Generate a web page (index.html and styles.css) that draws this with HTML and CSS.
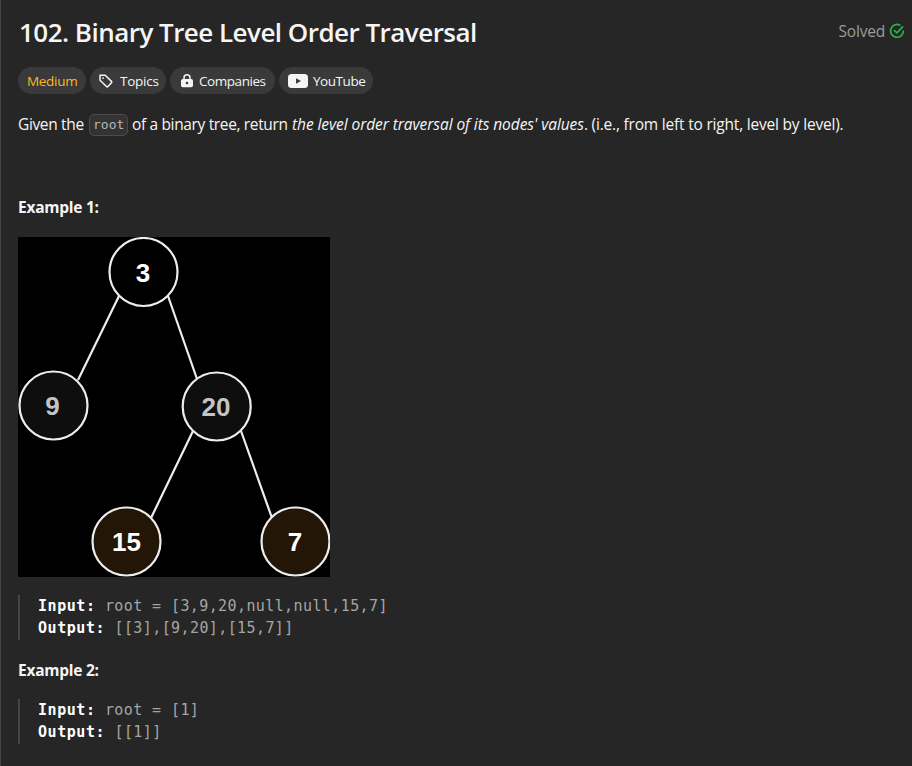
FILE: index.html
```html
<!DOCTYPE html>
<html lang="en">
<head>
<meta charset="utf-8">
<title>102. Binary Tree Level Order Traversal</title>
<link rel="stylesheet" href="styles.css">
</head>
<body>
<main class="problem">
  <header class="heading">
    <h1>102. Binary Tree Level Order Traversal</h1>
    <div class="status"><span>Solved</span>
      <svg width="16" height="16" viewBox="0 0 16 16" fill="none" stroke="#2cb34b" stroke-width="1.7" stroke-linecap="round" stroke-linejoin="round"><path d="M10.8 2.1A6.4 6.4 0 1 0 14.4 8"/><path d="M5.5 7.6l2.3 2.2 5.8-6"/></svg>
    </div>
  </header>
  <div class="tags">
    <span class="tag medium">Medium</span>
    <span class="tag topics"><svg width="16" height="16" viewBox="0 0 16 16" fill="none" stroke="#f5f5f5" stroke-width="1.5" stroke-linejoin="round"><path d="M2 2.2h5.2l6.3 6.2a1 1 0 0 1 0 1.4l-3.6 3.7a1 1 0 0 1-1.4 0L2 7.3z"/><circle cx="5" cy="5.1" r=".9" fill="#f5f5f5" stroke="none"/></svg><span>Topics</span></span>
    <span class="tag companies"><svg width="14" height="16" viewBox="0 0 14 16"><path d="M4 7V4.8a3 3 0 0 1 6 0V7" fill="none" stroke="#f5f5f5" stroke-width="1.5"/><rect x="1" y="6" width="12" height="8.3" rx="1.8" fill="#f5f5f5"/><circle cx="7" cy="10" r="1.3" fill="#3a3a3a"/></svg><span>Companies</span></span>
    <span class="tag youtube"><svg width="20" height="14" viewBox="0 0 20 14"><rect width="20" height="14" rx="3.5" fill="#f5f5f5"/><path d="M8 4.3v5.4L13 7z" fill="#3a3a3a"/></svg><span>YouTube</span></span>
  </div>
  <p class="statement"><span class="lead">Given the</span><code>root</code><span class="mid">of a binary tree, return</span><em>the level order traversal of its nodes' values</em><span class="tail">. (i.e., from left to right, level by level).</span></p>
  <h2 class="first">Example 1:</h2>
  <svg class="tree" width="312" height="340" viewBox="0 0 312 340">
    <rect width="312" height="340" fill="#000"/>
    <g stroke="#ededed" stroke-width="2.200">
      <path d="M101 59L60 143M150 59L179 142M175 194L133 281M223 194L254 281"/>
      <circle cx="125.500" cy="35" r="34" fill="#000"/>
      <circle cx="35.500" cy="168.500" r="34" fill="#0e0e0e"/>
      <circle cx="198.700" cy="169.500" r="34" fill="#0e0e0e"/>
      <circle cx="108.500" cy="304.500" r="34" fill="#241607"/>
      <circle cx="277.500" cy="304.500" r="34" fill="#241607"/>
    </g>
    <g class="labels">
      <text x="125" y="45">3</text>
      <text class="dim" x="34.500" y="177.500">9</text>
      <text class="dim" x="198" y="179">20</text>
      <text x="108.500" y="314">15</text>
      <text x="277" y="314">7</text>
    </g>
  </svg>
  <pre><b>Input:</b> root = [3,9,20,null,null,15,7]
<b>Output:</b> [[3],[9,20],[15,7]]</pre>
  <h2>Example 2:</h2>
  <pre><b>Input:</b> root = [1]
<b>Output:</b> [[1]]</pre>
</main>
</body>
</html>
```
FILE: styles.css
```css
* { box-sizing: border-box; }
body { margin: 0; background: #262626; color: #f5f5f5; font-family: "Open Sans", "Noto Sans", sans-serif; }
.problem { height: 766px; padding: 14px 7px 0 17px; border-left: 1px solid #454545; overflow: hidden; }
.heading { display: flex; justify-content: space-between; height: 36px; }
h1 { margin: 0 0 0 1px; font-size: 26px; line-height: 36px; font-weight: 600; letter-spacing: -0.53px; white-space: nowrap; }
.status { display: flex; align-items: center; gap: 4px; height: 34px; color: #9c9c9c; font-size: 15.5px; letter-spacing: -0.2px; }
.tags { display: flex; gap: 4px; margin-top: 17px; height: 27px; }
.tag { display: flex; align-items: center; height: 27px; border-radius: 14px; background: #3a3a3a; font-size: 13.5px; line-height: 27px; white-space: nowrap; }
.tag span { padding-top: 2px; }
.medium { width: 68px; padding: 2px 0 0 9px; color: #ffb71f; letter-spacing: -0.3px; }
.topics { width: 76px; padding-left: 8px; gap: 6px; letter-spacing: -0.25px; }
.companies { width: 105px; padding-left: 10px; gap: 5px; letter-spacing: -0.45px; }
.youtube { width: 94px; padding-left: 9px; gap: 5px; letter-spacing: -0.45px; }
.statement { display: flex; align-items: center; margin: 20px 0 0; height: 22px; font-size: 15.5px; line-height: 20px; white-space: nowrap; }
.statement span, .statement em { position: relative; top: -1px; }
.lead { width: 71px; letter-spacing: -0.35px; }
code { width: 39px; height: 22px; padding-left: 3px; border: 1px solid #4c4c4c; border-radius: 5px; background: #333; color: #b8b8b8; font: 13px/20px "DejaVu Sans Mono", monospace; }
.mid { width: 164px; padding-left: 4px; letter-spacing: -0.35px; }
em { letter-spacing: -0.07px; }
.tail { letter-spacing: -0.2px; }
h2 { margin: 19px 0 0; font-size: 15.5px; line-height: 22px; font-weight: 700; letter-spacing: -0.25px; }
h2.first { margin-top: 60px; }
.tree { display: block; margin-top: 19px; }
.labels { fill: #fff; font: bold 26px "Liberation Sans", sans-serif; text-anchor: middle; }
.labels .dim { fill: #c4c4c4; }
pre { margin: 18px 0 0; padding-left: 18px; border-left: 2px solid #454545; color: #a5a5a5; font: 15px/22.4px "DejaVu Sans Mono", monospace; letter-spacing: 0.4px; }
pre b { color: #fff; letter-spacing: 0.55px; }
```
